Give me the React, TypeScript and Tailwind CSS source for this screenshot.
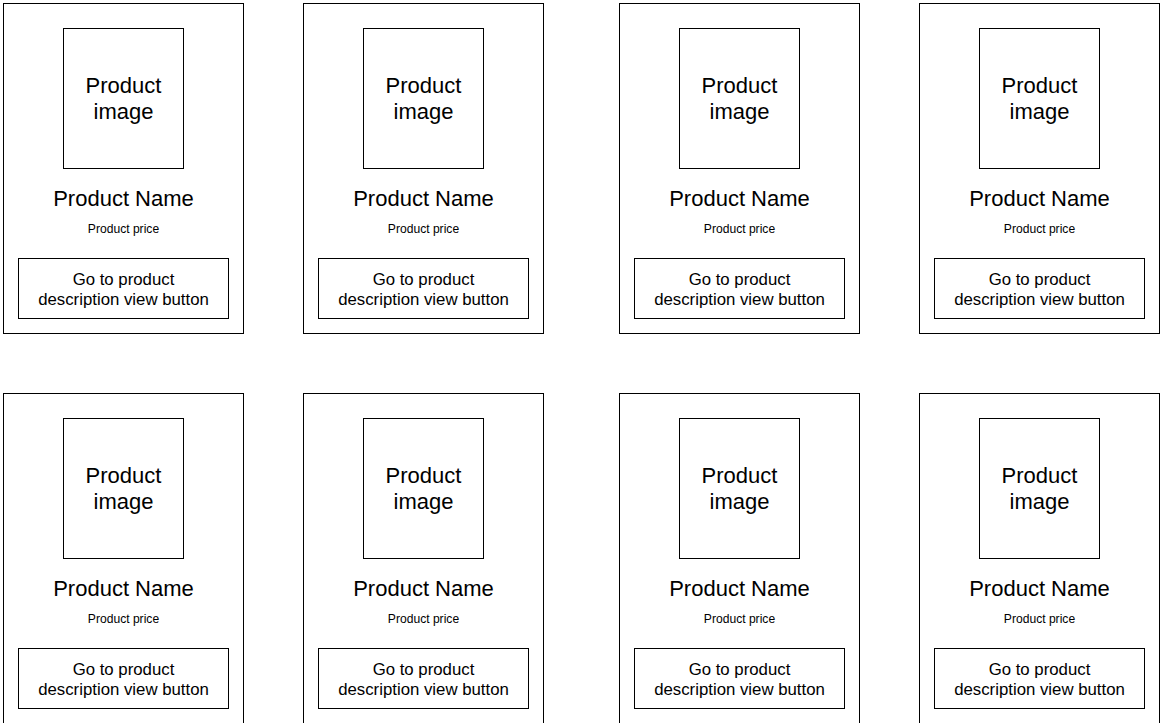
const cols = ["ml-[3px]", "ml-[59px]", "ml-[75px]", "ml-[59px]"];

function ProductCard({ className }: { className: string }) {
  return (
    <div className={`${className} w-[241px] h-[331px] shrink-0 border border-black flex flex-col items-center pt-[24px]`}>
      <div className="w-[121px] h-[141px] border border-black flex items-center justify-center text-center text-[22px] leading-[26px]">
        Product
        <br />
        image
      </div>
      <div className="mt-[18px] text-[22px] leading-[24px]">Product Name</div>
      <div className="mt-[10px] text-[12.1px] leading-[16px]">Product price</div>
      <div className="mt-[21px] w-[211px] h-[61px] border border-black pt-[2px] flex items-center justify-center text-center text-[16.8px] leading-[20px]">
        Go to product
        <br />
        description view button
      </div>
    </div>
  );
}

export default function App() {
  return (
    <div className="w-[1160px] h-[723px] overflow-hidden bg-white text-black pt-[3px] flex flex-col gap-[59px] font-['Liberation_Sans',Arial,sans-serif]">
      {[0, 1].map((row) => (
        <div key={row} className="flex">
          {cols.map((c, i) => (
            <ProductCard key={i} className={c} />
          ))}
        </div>
      ))}
    </div>
  );
}
